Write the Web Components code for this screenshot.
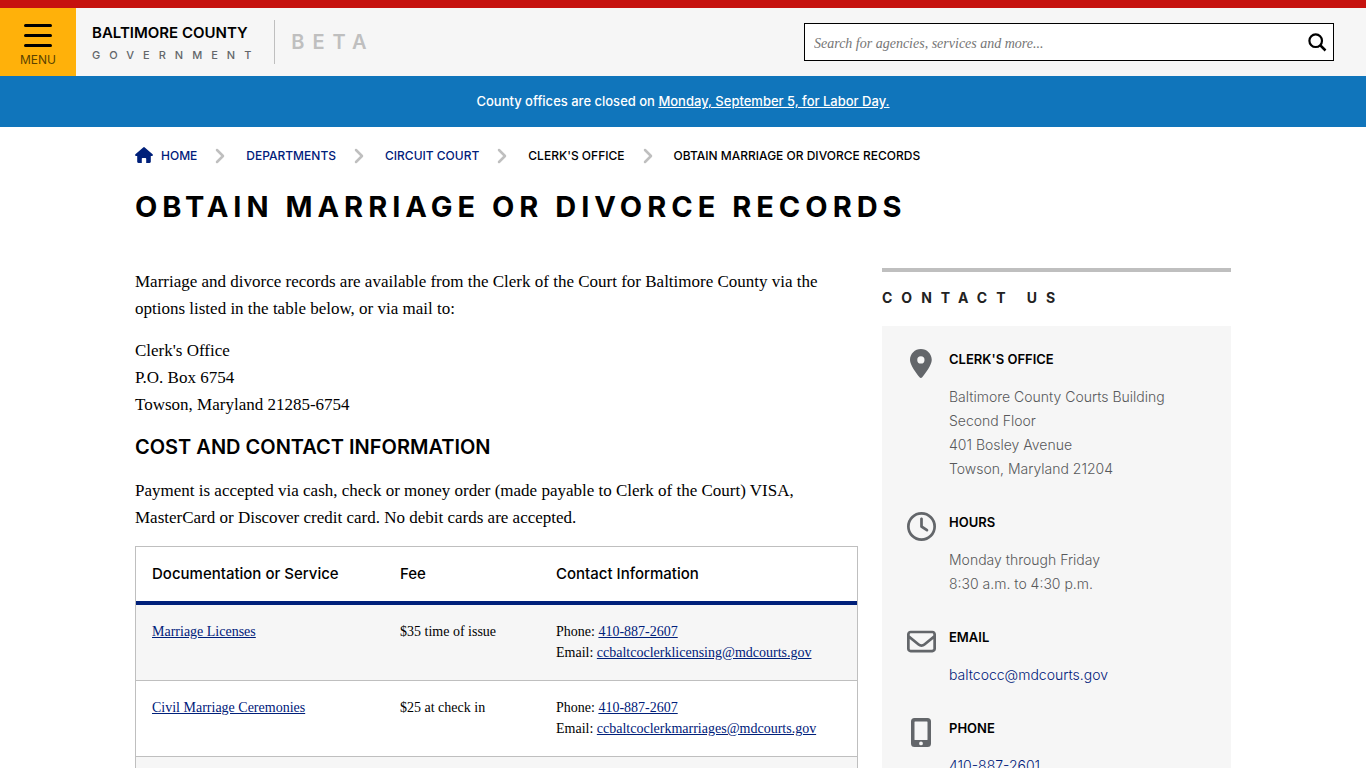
<!DOCTYPE html>
<html lang="en">
<head>
<meta charset="utf-8">
<meta name="viewport" content="width=device-width, initial-scale=1">
<title>Obtain Marriage or Divorce Records - Baltimore County</title>
<style>
  :root {
    --sans: Inter, "Open Sans", "Liberation Sans", sans-serif;
    --serif: "Liberation Serif", "Times New Roman", serif;
    --navy: #00207a;
    --line: #bfbfbf;
    --panel: #f6f6f6;
    --grey: #63666a;
  }
  body {
    margin: 0;
    background: #fff;
    color: #000;
    font-family: var(--serif);
  }
</style>
</head>
<body>
<site-header></site-header>
<alert-banner>County offices are closed on <a href="#">Monday, September 5, for Labor Day.</a></alert-banner>
<page-layout>
  <bread-crumbs slot="top">
    <crumb-item href="#" icon="home">Home</crumb-item>
    <crumb-item href="#">Departments</crumb-item>
    <crumb-item href="#">Circuit Court</crumb-item>
    <crumb-item>Clerk's Office</crumb-item>
    <crumb-item last>Obtain Marriage or Divorce Records</crumb-item>
  </bread-crumbs>
  <page-title slot="top">Obtain Marriage or Divorce Records</page-title>
  <records-article></records-article>
  <contact-panel slot="side" heading="Contact Us">
    <contact-item icon="pin" heading="Clerk's Office">Baltimore County Courts Building<br>Second Floor<br>401 Bosley Avenue<br>Towson, Maryland 21204</contact-item>
    <contact-item icon="clock" heading="Hours">Monday through Friday<br>8:30 a.m. to 4:30 p.m.</contact-item>
    <contact-item icon="mail" heading="Email"><a href="#">baltcocc@mdcourts.gov</a></contact-item>
    <contact-item icon="phone" heading="Phone"><a href="#">410-887-2601</a></contact-item>
  </contact-panel>
</page-layout>

<script>
const ICONS = {
  home: `<svg viewBox="0 0 18 19" width="18" height="19" fill="currentColor"><path d="M9 0Q8.600 0 8.200.4L.4 7.300C-.2 8 .1 9 1 9h1.200v5.800c0 .7.5 1.200 1.200 1.200H6.800v-4c0-.6.4-1 1-1h2.400c.6 0 1 .4 1 1v4h3.400c.7 0 1.200-.5 1.200-1.200V9H17c.9 0 1.200-1 .6-1.700L9.800.4Q9.400 0 9 0z"/></svg>`,
  chevron: `<svg viewBox="0 0 10 16" width="10" height="16" fill="none" stroke="#bfbfbf" stroke-width="2.500" stroke-linecap="round" stroke-linejoin="round"><path d="M2 2l6 6-6 6"/></svg>`,
  search: `<svg viewBox="0 0 19 19" width="19" height="19" fill="none" stroke="#000" stroke-width="2.200"><circle cx="7.700" cy="7.700" r="6.300"/><path d="M12 12l5.500 5.500" stroke-width="2.500"/></svg>`,
  pin: `<svg viewBox="0 0 384 512" height="29" fill="currentColor"><path d="M215.700 499.200C267 435 384 279.400 384 192C384 86 298 0 192 0S0 86 0 192c0 87.400 117 243 168.300 307.200c12.300 15.300 35.100 15.300 47.400 0zM192 128a64 64 0 1 1 0 128 64 64 0 1 1 0-128z" fill-rule="evenodd"/></svg>`,
  clock: `<svg viewBox="0 0 512 512" height="29" fill="currentColor"><path d="M464 256A208 208 0 1 1 48 256a208 208 0 1 1 416 0zM0 256a256 256 0 1 0 512 0A256 256 0 1 0 0 256zM232 120V256c0 8 4 15.500 10.700 20l96 64c11 7.400 25.900 4.400 33.300-6.700s4.400-25.900-6.700-33.300L280 243.200V120c0-13.300-10.700-24-24-24s-24 10.700-24 24z"/></svg>`,
  mail: `<svg viewBox="0 0 512 512" height="29" fill="currentColor"><path d="M64 112c-8.800 0-16 7.200-16 16v22.100L220.500 291.700c20.700 17 50.400 17 71.100 0L464 150.100V128c0-8.800-7.200-16-16-16H64zM48 212.200V384c0 8.800 7.200 16 16 16H448c8.800 0 16-7.200 16-16V212.200L322 328.800c-38.400 31.500-93.700 31.500-132 0L48 212.200zM0 128C0 92.700 28.700 64 64 64H448c35.300 0 64 28.700 64 64V384c0 35.300-28.700 64-64 64H64c-35.300 0-64-28.700-64-64V128z"/></svg>`,
  phone: `<svg viewBox="0 0 20 29" height="29" fill="currentColor"><path fill-rule="evenodd" d="M3.500 0h13A3.500 3.500 0 0 1 20 3.500v22a3.500 3.500 0 0 1-3.500 3.500h-13A3.500 3.500 0 0 1 0 25.500v-22A3.500 3.500 0 0 1 3.500 0zM4 3.500a.5.500 0 0 0-.5.500v17.500a.5.500 0 0 0 .5.500h12a.5.500 0 0 0 .5-.5V4a.5.500 0 0 0-.5-.5zM10 23.500a1.900 1.900 0 1 0 0 3.800 1.900 1.900 0 0 0 0-3.800z"/></svg>`
};

class SiteHeader extends HTMLElement {
  constructor() {
    super();
    this.attachShadow({ mode: "open" });
  }

  connectedCallback() {
    this.shadowRoot.innerHTML = `
      <style>
        :host { display: block; border-top: 8px solid #c6120f; background: var(--panel); font-family: var(--sans); }
        header { display: flex; align-items: stretch; height: 68px; }
        .menu {
          width: 76px; border: 0; padding: 6px 0 0; background: #ffb10a; color: #5c4300;
          display: flex; flex-direction: column; align-items: center; justify-content: center; gap: 7px;
          font: 12px/12px var(--sans); cursor: pointer;
        }
        .menu i { width: 28px; height: 3px; border-radius: 2px; background: #000; }
        .brand { display: flex; flex-direction: column; justify-content: center; gap: 4px; margin-left: 16px; padding-top: 4px; color: #000; text-decoration: none; }
        .brand b { font-size: 15px; line-height: 18px; font-weight: 600; }
        .brand span { font-size: 11px; line-height: 18px; font-weight: 500; letter-spacing: 9px; color: var(--grey); }
        .beta { align-self: center; margin-left: 14px; padding-left: 16px; border-left: 1px solid var(--line); font-size: 20px; line-height: 44px; font-weight: 600; letter-spacing: 8px; color: var(--line); }
        form { display: flex; align-items: center; align-self: center; box-sizing: border-box; width: 530px; height: 38px; margin: 0 32px 0 auto; border: 1px solid #000; background: #fff; }
        input { flex: 1; min-width: 0; border: 0; padding: 3px 9px 0; background: none; outline: 0; font: italic 14px/24px var(--serif); }
        input::placeholder { color: #757575; opacity: 1; }
        form button { border: 0; padding: 0 6px; background: none; line-height: 0; cursor: pointer; }
      </style>
      <header>
        <button class="menu" type="button"><i></i><i></i><i></i><span>MENU</span></button>
        <a class="brand" href="#"><b>BALTIMORE COUNTY</b><span>GOVERNMENT</span></a>
        <span class="beta">BETA</span>
        <form role="search">
          <input type="text" aria-label="Search" placeholder="Search for agencies, services and more...">
          <button type="button" aria-label="Submit search">${ICONS.search}</button>
        </form>
      </header>
    `;
  }
}

class AlertBanner extends HTMLElement {
  constructor() {
    super();
    this.attachShadow({ mode: "open" });
  }

  connectedCallback() {
    this.shadowRoot.innerHTML = `
      <style>
        :host { display: block; padding: 15px 20px 16px; background: #1075bb; color: #fff; font: 500 13px/20px var(--sans); text-align: center; }
        ::slotted(a) { color: #fff; text-decoration: underline; }
      </style>
      <slot></slot>
    `;
  }
}

class PageLayout extends HTMLElement {
  constructor() {
    super();
    this.attachShadow({ mode: "open" });
  }

  connectedCallback() {
    this.shadowRoot.innerHTML = `
      <style>
        :host { display: block; max-width: 1096px; margin: 0 auto; }
        .columns { display: grid; grid-template-columns: minmax(0, 1fr) 349px; gap: 24px; align-items: start; }
      </style>
      <slot name="top"></slot>
      <div class="columns">
        <main><slot></slot></main>
        <aside><slot name="side"></slot></aside>
      </div>
    `;
  }
}

class BreadCrumbs extends HTMLElement {
  constructor() {
    super();
    this.attachShadow({ mode: "open" });
  }

  connectedCallback() {
    this.shadowRoot.innerHTML = `
      <style>
        :host { display: block; padding: 19px 0; }
        nav { display: flex; align-items: center; }
      </style>
      <nav aria-label="Breadcrumb"><slot></slot></nav>
    `;
  }
}

class CrumbItem extends HTMLElement {
  constructor() {
    super();
    this.attachShadow({ mode: "open" });
  }

  connectedCallback() {
    const tag = this.hasAttribute("href") ? "a" : "span";
    const href = this.hasAttribute("href") ? ` href="${this.getAttribute("href")}"` : "";
    this.shadowRoot.innerHTML = `
      <style>
        :host { display: flex; align-items: center; font: 500 12px/20px var(--sans); text-transform: uppercase; }
        a, span { display: flex; align-items: center; gap: 8px; color: #000; text-decoration: none; }
        a { color: var(--navy); }
        svg { display: block; }
        .sep { padding: 0 21px 0 18px; }
      </style>
      <${tag}${href}>${ICONS[this.getAttribute("icon")] || ""}<slot></slot></${tag}>
      ${this.hasAttribute("last") ? "" : `<div class="sep">${ICONS.chevron}</div>`}
    `;
  }
}

class PageTitle extends HTMLElement {
  constructor() {
    super();
    this.attachShadow({ mode: "open" });
  }

  connectedCallback() {
    this.shadowRoot.innerHTML = `
      <style>
        :host { display: block; padding: 4px 0 43px; }
        h1 { margin: 0; font: 700 29px/36px var(--sans); letter-spacing: 5px; text-transform: uppercase; }
      </style>
      <h1><slot></slot></h1>
    `;
  }
}

class RecordsArticle extends HTMLElement {
  constructor() {
    super();
    this.attachShadow({ mode: "open" });
  }

  connectedCallback() {
    this.shadowRoot.innerHTML = `
      <style>
        :host { display: flex; flex-direction: column; gap: 15px; font-size: 17px; line-height: 27px; }
        p, h2 { margin: 0; }
        h2 { font: 600 20px/29px var(--sans); }
      </style>
      <p>Marriage and divorce records are available from the Clerk of the Court for Baltimore County via the options listed in the table below, or via mail to:</p>
      <p>Clerk's Office<br>P.O. Box 6754<br>Towson, Maryland 21285-6754</p>
      <h2>COST AND CONTACT INFORMATION</h2>
      <p>Payment is accepted via cash, check or money order (made payable to Clerk of the Court) VISA, MasterCard or Discover credit card. No debit cards are accepted.</p>
      <records-table></records-table>
    `;
  }
}

class RecordsTable extends HTMLElement {
  constructor() {
    super();
    this.attachShadow({ mode: "open" });
    this.rows = [
      { service: "Marriage Licenses", fee: "$35 time of issue", phone: "410-887-2607", email: "ccbaltcoclerklicensing@mdcourts.gov" },
      { service: "Civil Marriage Ceremonies", fee: "$25 at check in", phone: "410-887-2607", email: "ccbaltcoclerkmarriages@mdcourts.gov" }
    ];
  }

  renderRow(row) {
    return `
      <tr>
        <td><a href="#">${row.service}</a></td>
        <td>${row.fee}</td>
        <td>Phone: <a href="#">${row.phone}</a><br>Email: <a href="#">${row.email}</a></td>
      </tr>
    `;
  }

  connectedCallback() {
    this.shadowRoot.innerHTML = `
      <style>
        :host { display: block; border: 1px solid var(--line); }
        table { width: 100%; border-collapse: separate; border-spacing: 0; table-layout: fixed; }
        th, td { padding: 16px; text-align: left; vertical-align: top; }
        th { border-bottom: 4px solid var(--navy); font: 500 15px/22px var(--sans); }
        td { height: 43px; border-bottom: 1px solid var(--line); font-size: 14px; line-height: 21px; }
        th:nth-child(1) { width: 216px; }
        th:nth-child(2) { width: 124px; }
        tbody tr:nth-child(odd) { background: var(--panel); }
        a { color: var(--navy); }
      </style>
      <table>
        <thead><tr><th>Documentation or Service</th><th>Fee</th><th>Contact Information</th></tr></thead>
        <tbody>
          ${this.rows.map((row) => this.renderRow(row)).join("")}
          <tr><td></td><td></td><td></td></tr>
        </tbody>
      </table>
    `;
  }
}

class ContactPanel extends HTMLElement {
  constructor() {
    super();
    this.attachShadow({ mode: "open" });
  }

  connectedCallback() {
    this.shadowRoot.innerHTML = `
      <style>
        :host { display: block; border-top: 4px solid var(--line); font-family: var(--sans); }
        h2 { margin: 0; padding: 15px 0 17px; font-size: 14px; line-height: 22px; font-weight: 700; letter-spacing: 9px; text-transform: uppercase; color: #222; }
        .items { display: flex; flex-direction: column; gap: 31px; padding: 23px 24px; background: var(--panel); }
      </style>
      <h2>${this.getAttribute("heading")}</h2>
      <div class="items"><slot></slot></div>
    `;
  }
}

class ContactItem extends HTMLElement {
  constructor() {
    super();
    this.attachShadow({ mode: "open" });
  }

  connectedCallback() {
    this.shadowRoot.innerHTML = `
      <style>
        :host { display: grid; grid-template-columns: 30px 1fr; gap: 13px; }
        .icon { display: flex; justify-content: center; align-items: flex-start; color: var(--grey); }
        h3 { margin: 0 0 16px; font-size: 13px; line-height: 20px; font-weight: 600; text-transform: uppercase; }
        .text { font-size: 14px; line-height: 24px; font-weight: 300; color: #58595b; }
        ::slotted(a) { color: var(--navy); text-decoration: none; }
      </style>
      <div class="icon">${ICONS[this.getAttribute("icon")]}</div>
      <div>
        <h3>${this.getAttribute("heading")}</h3>
        <div class="text"><slot></slot></div>
      </div>
    `;
  }
}

customElements.define("site-header", SiteHeader);
customElements.define("alert-banner", AlertBanner);
customElements.define("page-layout", PageLayout);
customElements.define("bread-crumbs", BreadCrumbs);
customElements.define("crumb-item", CrumbItem);
customElements.define("page-title", PageTitle);
customElements.define("records-table", RecordsTable);
customElements.define("records-article", RecordsArticle);
customElements.define("contact-panel", ContactPanel);
customElements.define("contact-item", ContactItem);
</script>
</body>
</html>
